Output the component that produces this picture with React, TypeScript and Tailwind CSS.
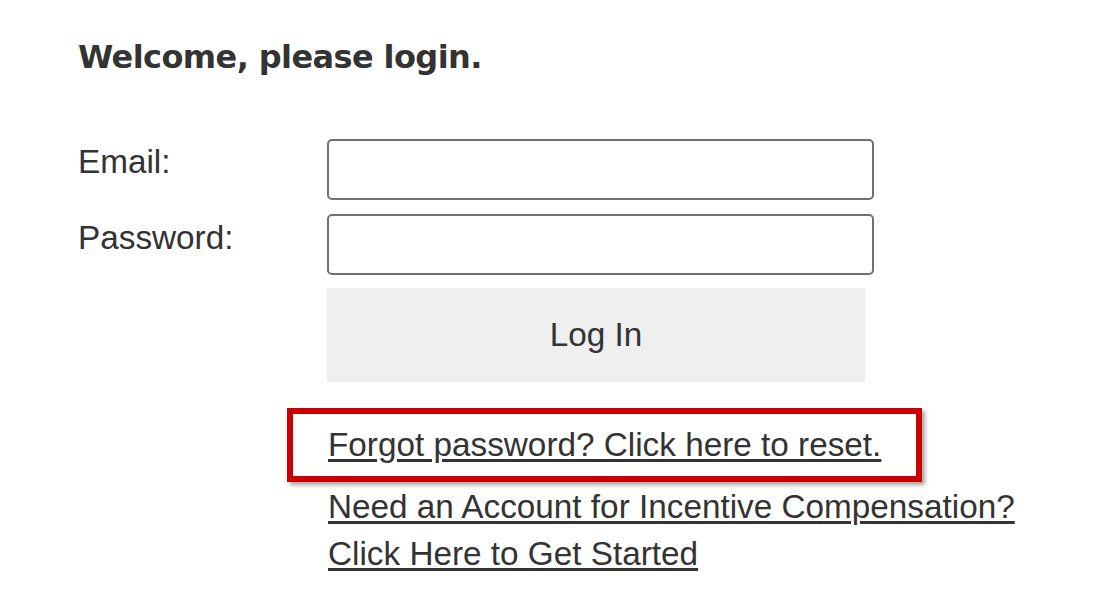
export default function App() {
  return (
    <div className="min-h-screen bg-white pl-[78px] pt-[39px] font-['Liberation_Sans',Arial,sans-serif] text-[#333333]">
      {/* Heading */}
      <h1 className="font-['DejaVu_Sans',Verdana,sans-serif] text-[32px] font-bold leading-[36px] tracking-[-0.6px]">
        Welcome, please login.
      </h1>

      {/* Login form */}
      <form className="mt-[64px] grid grid-cols-[249px_547px] gap-y-[14px]">
        <label htmlFor="email" className="pt-[4px] text-[33.3px] leading-[38px]">
          Email:
        </label>
        <input
          id="email"
          type="email"
          className="h-[61px] rounded-[5px] border-2 border-[#707070] bg-white px-2 outline-none"
        />

        <label htmlFor="password" className="pt-[5px] text-[33.3px] leading-[38px]">
          Password:
        </label>
        <input
          id="password"
          type="password"
          className="h-[61px] rounded-[5px] border-2 border-[#707070] bg-white px-2 outline-none"
        />

        <div />
        <button
          type="button"
          className="-mt-[1px] flex h-[94px] w-[538px] items-center justify-center bg-[#efefef] text-[33.3px] leading-[38px] text-[#333333]"
        >
          Log In
        </button>
      </form>

      {/* Links */}
      <div className="ml-[209px] mt-[26px]">
        <div className="w-[635px] border-[6px] border-[#cc0000] pl-[35px] pt-[12px] pb-[12px] shadow-[3px_3px_4px_rgba(0,0,0,0.35)]">
          <a href="#" className="text-[33.3px] leading-[38px] text-[#333333] underline underline-offset-[3px]">
            Forgot password? Click here to reset.
          </a>
        </div>
        <div className="mt-px pl-[41px] text-[33.3px] leading-[47px]">
          <a href="#" className="block underline underline-offset-[3px]">
            Need an Account for Incentive Compensation?
          </a>
          <a href="#" className="block underline underline-offset-[3px]">
            Click Here to Get Started
          </a>
        </div>
      </div>
    </div>
  );
}
